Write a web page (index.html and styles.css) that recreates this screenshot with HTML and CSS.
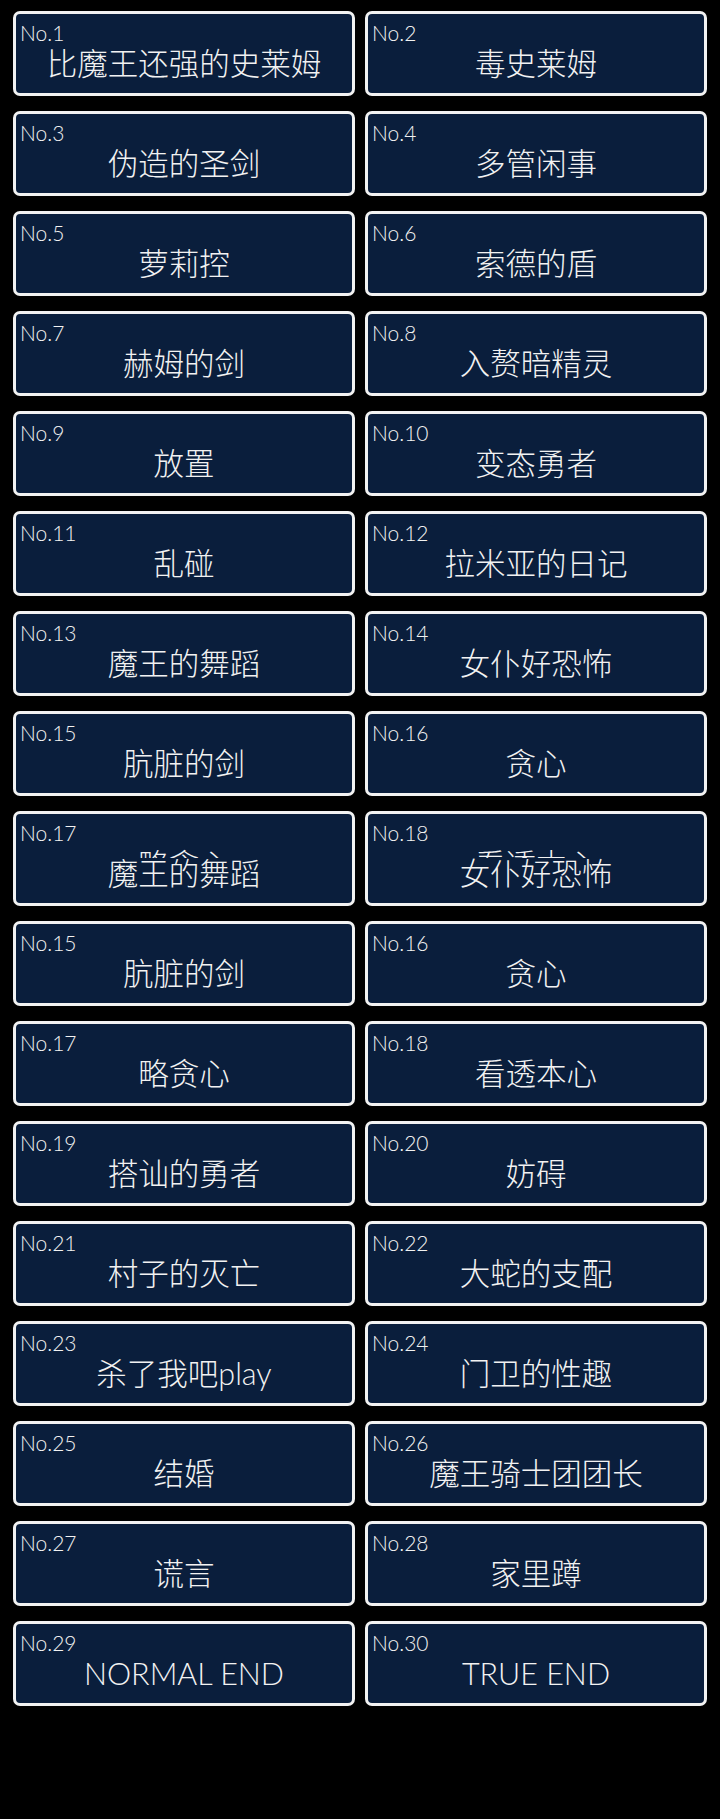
FILE: index.html
```html
<!DOCTYPE html>
<html lang="zh-CN">
  <head>
    <meta charset="UTF-8" />
    <meta name="viewport" content="width=device-width, initial-scale=1.0" />
    <title>结局一览</title>
    <link rel="stylesheet" href="styles.css">
  </head>
  <body>
    <div class="end-list">
      <div class="card"><div class="num">No.1</div><div class="title">比魔王还强的史莱姆</div></div>
      <div class="card"><div class="num">No.2</div><div class="title">毒史莱姆</div></div>
      <div class="card"><div class="num">No.3</div><div class="title">伪造的圣剑</div></div>
      <div class="card"><div class="num">No.4</div><div class="title">多管闲事</div></div>
      <div class="card"><div class="num">No.5</div><div class="title">萝莉控</div></div>
      <div class="card"><div class="num">No.6</div><div class="title">索德的盾</div></div>
      <div class="card"><div class="num">No.7</div><div class="title">赫姆的剑</div></div>
      <div class="card"><div class="num">No.8</div><div class="title">入赘暗精灵</div></div>
      <div class="card"><div class="num">No.9</div><div class="title">放置</div></div>
      <div class="card"><div class="num">No.10</div><div class="title">变态勇者</div></div>
      <div class="card"><div class="num">No.11</div><div class="title">乱碰</div></div>
      <div class="card"><div class="num">No.12</div><div class="title">拉米亚的日记</div></div>
      <div class="card"><div class="num">No.13</div><div class="title">魔王的舞蹈</div></div>
      <div class="card"><div class="num">No.14</div><div class="title">女仆好恐怖</div></div>
      <div class="card"><div class="num">No.15</div><div class="title">肮脏的剑</div></div>
      <div class="card"><div class="num">No.16</div><div class="title">贪心</div></div>

      <!-- row caught mid-refresh: the next titles peek in above the old ones -->
      <div class="card tall">
        <div class="num">No.17</div>
        <div class="ghost"><div class="title">略贪心</div></div>
        <div class="title">魔王的舞蹈</div>
      </div>
      <div class="card tall">
        <div class="num">No.18</div>
        <div class="ghost"><div class="title">看透本心</div></div>
        <div class="title">女仆好恐怖</div>
      </div>

      <div class="card"><div class="num">No.15</div><div class="title">肮脏的剑</div></div>
      <div class="card"><div class="num">No.16</div><div class="title">贪心</div></div>
      <div class="card"><div class="num">No.17</div><div class="title">略贪心</div></div>
      <div class="card"><div class="num">No.18</div><div class="title">看透本心</div></div>
      <div class="card"><div class="num">No.19</div><div class="title">搭讪的勇者</div></div>
      <div class="card"><div class="num">No.20</div><div class="title">妨碍</div></div>
      <div class="card"><div class="num">No.21</div><div class="title">村子的灭亡</div></div>
      <div class="card"><div class="num">No.22</div><div class="title">大蛇的支配</div></div>
      <div class="card"><div class="num">No.23</div><div class="title">杀了我吧play</div></div>
      <div class="card"><div class="num">No.24</div><div class="title">门卫的性趣</div></div>
      <div class="card"><div class="num">No.25</div><div class="title">结婚</div></div>
      <div class="card"><div class="num">No.26</div><div class="title">魔王骑士团团长</div></div>
      <div class="card"><div class="num">No.27</div><div class="title">谎言</div></div>
      <div class="card"><div class="num">No.28</div><div class="title">家里蹲</div></div>
      <div class="card"><div class="num">No.29</div><div class="title">NORMAL END</div></div>
      <div class="card"><div class="num">No.30</div><div class="title">TRUE END</div></div>
    </div>
  </body>
</html>
```

FILE: styles.css
```css
body {
  margin: 0;
  background-color: #000;
  color: #f2f2f2;
  font-family: Lato, "Noto Sans CJK SC", sans-serif;
  font-weight: 300;
}
.end-list {
  display: grid;
  grid-template-columns: 1fr 1fr;
  gap: 15px 10px;
  padding: 11px 13px;
}
.card {
  height: 85px;
  box-sizing: border-box;
  border: 3px solid #f2f2f2;
  border-radius: 7px;
  background-color: #0a1e3c;
  padding: 7px 4px 0;
  overflow: hidden;
}
.card.tall {
  height: 95px;
}
.num {
  font-size: 21px;
  line-height: 24px;
}
.title {
  font-size: 30.5px;
  line-height: 36px;
  text-align: center;
  white-space: nowrap;
}
/* only the top few pixels of the incoming title show */
.ghost {
  height: 13px;
  overflow: hidden;
}
.ghost .title {
  margin-top: 1px;
}
.ghost + .title {
  margin-top: -3px;
}
```
